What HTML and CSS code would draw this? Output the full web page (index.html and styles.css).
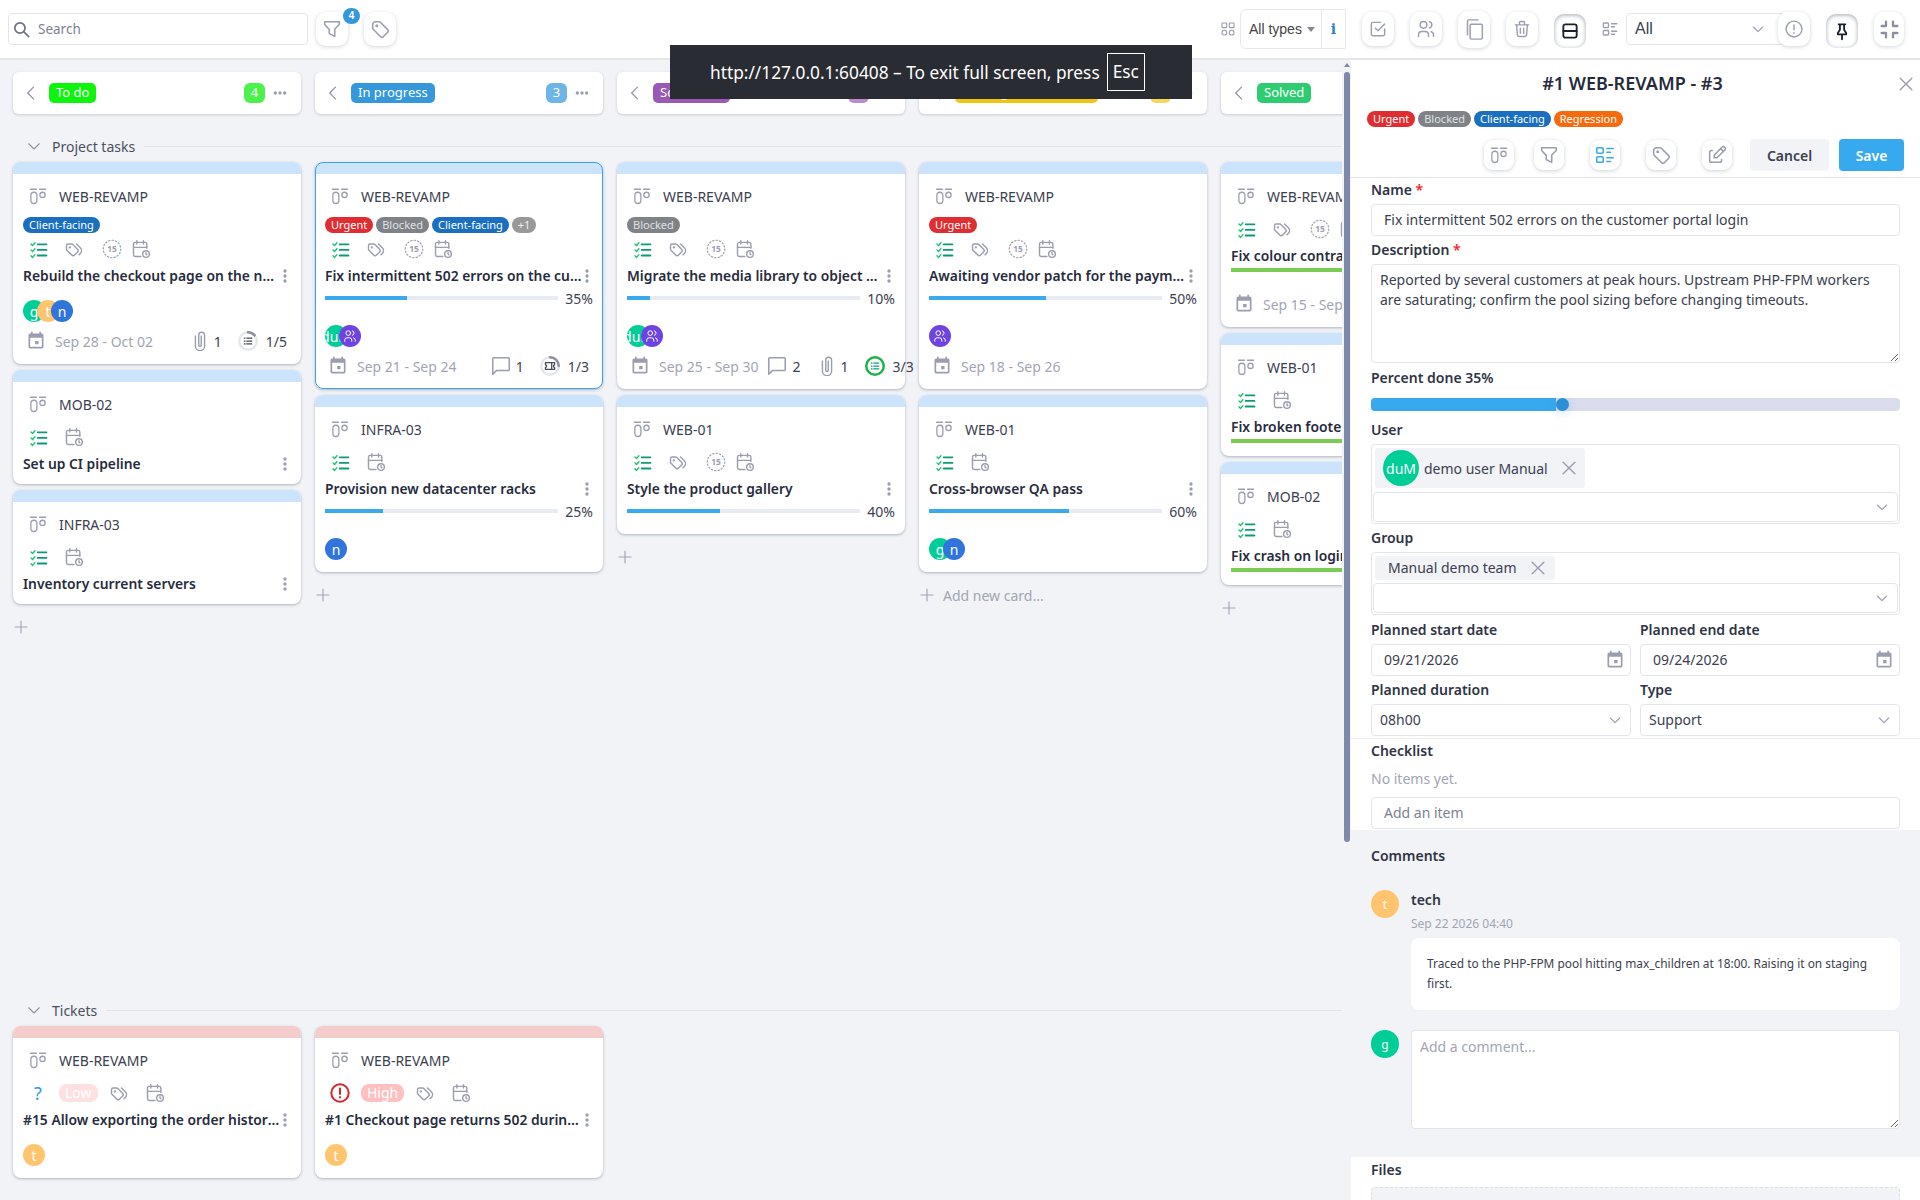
FILE: index.html
```html
<!DOCTYPE html>
<html lang="en">
<head>
    <meta charset="UTF-8">
    <title>Kanban</title>
    <link rel="stylesheet" href="styles.css">
</head>
<body>

<svg class="sprite" xmlns="http://www.w3.org/2000/svg">
    <symbol id="i-project" viewBox="0 0 24 24"><path d="M2 3h8M14 3h8"/><rect x="2.500" y="7" width="8" height="15" rx="4"/><circle cx="18" cy="10.500" r="3.500"/></symbol>
    <symbol id="i-checklist" viewBox="0 0 24 24"><path stroke="#18c26e" d="M2.500 5l2 2 3-3.500M2.500 12.500l2 2 3-3.500M2.500 20l2 2 3-3.500"/><path stroke="#0b9b77" stroke-width="2.400" d="M11 5.500h11M11 12.500h11M11 19.500h11"/></symbol>
    <symbol id="i-tags" viewBox="0 0 24 24"><path d="M3 8v4.172a2 2 0 0 0 .586 1.414l5.71 5.71a2.41 2.41 0 0 0 3.408 0l3.592-3.592a2.41 2.41 0 0 0 0-3.408l-5.71-5.71A2 2 0 0 0 9.172 6H5a2 2 0 0 0-2 2z"/><path d="M18 19l1.592-1.592a4.82 4.82 0 0 0 0-6.816L15 6"/><circle cx="7" cy="10" r=".6"/></symbol>
    <symbol id="i-estimate" viewBox="0 0 24 24"><circle cx="12" cy="12" r="10.500" stroke-width="1.400" stroke-dasharray="1.600 2.500"/><text x="12" y="15.500" font-size="10" font-weight="700" text-anchor="middle" stroke="none" fill="currentColor" font-family="Noto Sans, sans-serif">15</text></symbol>
    <symbol id="i-calclock" viewBox="0 0 24 24"><path d="M11.800 21H5a2 2 0 0 1-2-2V6a2 2 0 0 1 2-2h12a2 2 0 0 1 2 2v5"/><circle cx="18" cy="18" r="4"/><path d="M15 2v4M7 2v4M3 10h16M18 16.500V18l1 1"/></symbol>
    <symbol id="i-cal" viewBox="0 0 24 24"><path stroke="none" fill="currentColor" d="M19 3h-1V1h-2v2H8V1H6v2H5C3.890 3 3 3.900 3 5v14c0 1.100.890 2 2 2h14c1.100 0 2-.9 2-2V5c0-1.100-.9-2-2-2zm0 16H5V8h14v11zM11 12h4v4h-4z"/></symbol>
    <symbol id="i-clip" viewBox="0 0 24 24"><path d="M6.500 6v12a5.500 5.500 0 0 0 11 0V5a3.500 3.500 0 0 0-7 0v12a1.500 1.500 0 0 0 3 0V6"/></symbol>
    <symbol id="i-comment" viewBox="0 0 24 24"><path d="M4 3h16a1 1 0 0 1 1 1v12a1 1 0 0 1-1 1H7l-4 4V4a1 1 0 0 1 1-1z"/></symbol>
    <symbol id="i-search" viewBox="0 0 24 24"><circle cx="10" cy="10" r="6.500"/><path d="M15 15l6 6"/></symbol>
    <symbol id="i-filter" viewBox="0 0 24 24"><path d="M4 4h16v2.200a2 2 0 0 1-.6 1.400L15 12v8l-6-3v-4.500L4.500 7.600A2 2 0 0 1 4 6.200z"/></symbol>
    <symbol id="i-tag" viewBox="0 0 24 24"><circle cx="8.500" cy="8.500" r=".8"/><path d="M4 7v3.860c0 .54.210 1.050.590 1.430l8.120 8.120a2.030 2.030 0 0 0 2.860 0l4.830-4.830a2.030 2.030 0 0 0 0-2.860L12.290 4.590A2.030 2.030 0 0 0 10.860 4H7a3 3 0 0 0-3 3z"/></symbol>
    <symbol id="i-checkbox" viewBox="0 0 24 24"><path d="M9 11l3 3 8-8"/><path d="M20 12v6a2 2 0 0 1-2 2H6a2 2 0 0 1-2-2V6a2 2 0 0 1 2-2h9"/></symbol>
    <symbol id="i-users" viewBox="0 0 24 24"><circle cx="9" cy="7" r="4"/><path d="M3 21v-2a4 4 0 0 1 4-4h4a4 4 0 0 1 4 4v2"/><path d="M16 3.130a4 4 0 0 1 0 7.750"/><path d="M21 21v-2a4 4 0 0 0-3-3.850"/></symbol>
    <symbol id="i-copy" viewBox="0 0 24 24"><rect x="7" y="6" width="14" height="17" rx="1.500"/><path d="M4 18V2.500A1.500 1.500 0 0 1 5.500 1H16"/></symbol>
    <symbol id="i-trash" viewBox="0 0 24 24"><path d="M4 7h16M10 11v6M14 11v6M5.500 7l1 12a2 2 0 0 0 2 2h7a2 2 0 0 0 2-2l1-12M9 7V4a1 1 0 0 1 1-1h4a1 1 0 0 1 1 1v3"/></symbol>
    <symbol id="i-split" viewBox="0 0 24 24"><rect x="4" y="4" width="16" height="16" rx="2.500"/><path d="M4 12h16"/></symbol>
    <symbol id="i-listview" viewBox="0 0 24 24"><rect x="3" y="4" width="7" height="6" rx="1"/><path d="M14 5h7M14 9h4"/><rect x="3" y="14" width="7" height="6" rx="1"/><path d="M14 15h7M14 19h4"/></symbol>
    <symbol id="i-grid" viewBox="0 0 24 24"><rect x="3" y="3" width="7" height="7" rx="1"/><rect x="14" y="3" width="7" height="7" rx="1"/><rect x="3" y="14" width="7" height="7" rx="3"/><rect x="14" y="14" width="7" height="7" rx="3"/></symbol>
    <symbol id="i-alert" viewBox="0 0 24 24"><circle cx="12" cy="12" r="9.500"/><path d="M12 7v6M12 16.500v.5"/></symbol>
    <symbol id="i-pin" viewBox="0 0 24 24"><path d="M8 4h8M9.500 4v6.500L7 14.500v1.500h10v-1.500l-2.500-4V4M12 16v6"/></symbol>
    <symbol id="i-collapse" viewBox="0 0 24 24"><path d="M8 3v5H3M16 3v5h5M8 21v-5H3M16 21v-5h5"/></symbol>
    <symbol id="i-edit" viewBox="0 0 24 24"><path d="M7 7H6a2 2 0 0 0-2 2v9a2 2 0 0 0 2 2h9a2 2 0 0 0 2-2v-1"/><path d="M20.400 6.600a2.100 2.100 0 0 0-3-3L9 12v3h3z"/><path d="M16 5l3 3"/></symbol>
    <symbol id="i-x" viewBox="0 0 24 24"><path d="M5 5l14 14M19 5L5 19"/></symbol>
    <symbol id="i-down" viewBox="0 0 24 24"><path d="M5 9l7 7 7-7"/></symbol>
    <symbol id="i-left" viewBox="0 0 24 24"><path d="M15 5l-7 7 7 7"/></symbol>
    <symbol id="i-plus" viewBox="0 0 24 24"><path d="M12 3v18M3 12h18"/></symbol>
    <symbol id="i-vdots" viewBox="0 0 24 24"><circle cx="12" cy="4.500" r="2.500" fill="currentColor" stroke="none"/><circle cx="12" cy="12" r="2.500" fill="currentColor" stroke="none"/><circle cx="12" cy="19.500" r="2.500" fill="currentColor" stroke="none"/></symbol>
    <symbol id="i-hdots" viewBox="0 0 24 24"><circle cx="4" cy="12" r="2.800" fill="currentColor" stroke="none"/><circle cx="12" cy="12" r="2.800" fill="currentColor" stroke="none"/><circle cx="20" cy="12" r="2.800" fill="currentColor" stroke="none"/></symbol>
    <symbol id="i-ring-list" viewBox="0 0 24 24"><circle cx="12" cy="12" r="10.500" stroke="#e6e7ec" stroke-width="3"/><path stroke="#8d90a0" stroke-width="3" d="M12 1.500a10.500 10.500 0 0 1 8 3.700"/><path stroke="#444a5c" stroke-width="1.500" d="M7.500 8.500h1M7.500 12h1M7.500 15.500h1M10.500 8.500h6M10.500 12h6M10.500 15.500h6"/></symbol>
    <symbol id="i-ring-ticket" viewBox="0 0 24 24"><circle cx="12" cy="12" r="10.500" stroke="#e6e7ec" stroke-width="3"/><path stroke="#8d90a0" stroke-width="3" d="M12 1.500a10.500 10.500 0 0 1 10.500 10.500"/><path stroke="#444a5c" stroke-width="1.500" d="M6.500 8h11v2.500a1.500 1.500 0 0 0 0 3V16h-11v-2.500a1.500 1.500 0 0 0 0-3zM14 8v8"/></symbol>
    <symbol id="i-ring-done" viewBox="0 0 24 24"><circle cx="12" cy="12" r="10.500" stroke="#1fb24a" stroke-width="3"/><path stroke="#0b9b77" stroke-width="1.500" d="M7.500 8.500h1M7.500 12h1M7.500 15.500h1M10.500 8.500h6M10.500 12h6M10.500 15.500h6"/></symbol>
</svg>

<header class="topbar">
    <div class="search">
        <svg class="ic ic-19"><use href="#i-search"/></svg>
        <span>Search</span>
    </div>
    <button class="tb-btn has-badge"><svg class="ic ic-22"><use href="#i-filter"/></svg><span class="badge">4</span></button>
    <button class="tb-btn tb-tag"><svg class="ic ic-22"><use href="#i-tag"/></svg></button>

    <div class="tb-right">
        <svg class="ic ic-16 tb-grid"><use href="#i-grid"/></svg>
        <div class="types">
            <span class="types-label">All types <i class="caret"></i></span>
            <span class="types-info">i</span>
        </div>
        <button class="tb-btn"><svg class="ic ic-20"><use href="#i-checkbox"/></svg></button>
        <button class="tb-btn"><svg class="ic ic-20"><use href="#i-users"/></svg></button>
        <button class="tb-btn tb-tall"><svg class="ic ic-21"><use href="#i-copy"/></svg></button>
        <button class="tb-btn"><svg class="ic ic-20"><use href="#i-trash"/></svg></button>
        <button class="tb-btn active"><svg class="ic ic-20 dark"><use href="#i-split"/></svg></button>
        <svg class="ic ic-18 tb-list"><use href="#i-listview"/></svg>
        <div class="all-select">All<svg class="ic ic-16"><use href="#i-down"/></svg></div>
        <button class="tb-btn tb-over"><svg class="ic ic-20"><use href="#i-alert"/></svg></button>
        <button class="tb-btn active"><svg class="ic ic-20 dark"><use href="#i-pin"/></svg></button>
        <button class="tb-btn tb-last"><svg class="ic ic-21 dark-gray"><use href="#i-collapse"/></svg></button>
    </div>
</header>

<main class="main">
    <section class="board">
        <div class="col-heads">
            <div class="col-head">
                <svg class="ic ic-20 chev"><use href="#i-left"/></svg>
                <span class="pill" style="background:#0df50d">To do</span>
                <span class="count" style="background:#4cf24c">4</span>
                <svg class="ic ic-14 hdots"><use href="#i-hdots"/></svg>
            </div>
            <div class="col-head">
                <svg class="ic ic-20 chev"><use href="#i-left"/></svg>
                <span class="pill" style="background:#3498db">In progress</span>
                <span class="count" style="background:#6cb5e6">3</span>
                <svg class="ic ic-14 hdots"><use href="#i-hdots"/></svg>
            </div>
            <div class="col-head">
                <svg class="ic ic-20 chev"><use href="#i-left"/></svg>
                <span class="pill" style="background:#9b59b6">Scheduled</span>
                <span class="count" style="background:#b98ccb">3</span>
                <svg class="ic ic-14 hdots"><use href="#i-hdots"/></svg>
            </div>
            <div class="col-head">
                <svg class="ic ic-20 chev"><use href="#i-left"/></svg>
                <span class="pill" style="background:#f1c40f">Waiting for customer</span>
                <span class="count" style="background:#f5d657">3</span>
                <svg class="ic ic-14 hdots"><use href="#i-hdots"/></svg>
            </div>
            <div class="col-head">
                <svg class="ic ic-20 chev"><use href="#i-left"/></svg>
                <span class="pill" style="background:#2ecc71">Solved</span>
            </div>
        </div>

        <!-- Project tasks -->
        <div class="lane lane-tasks">
            <div class="lane-title">
                <svg class="ic ic-18 lane-chev"><use href="#i-down"/></svg>
                <span>Project tasks</span>
                <i class="lane-line"></i>
            </div>
            <div class="lane-cols">
                <div class="col">
                    <article class="card">
                        <div class="strip"></div>
                        <div class="proj"><svg class="ic ic-18"><use href="#i-project"/></svg>WEB-REVAMP</div>
                        <div class="tags"><span class="tag tag-client">Client-facing</span></div>
                        <div class="icons"><span><svg class="ic ic-19"><use href="#i-checklist"/></svg></span><span><svg class="ic ic-20"><use href="#i-tags"/></svg></span><span><svg class="ic ic-20"><use href="#i-estimate"/></svg></span><span><svg class="ic ic-20"><use href="#i-calclock"/></svg></span></div>
                        <div class="title-row"><span class="title">Rebuild the checkout page on the new stack</span><svg class="ic vdots"><use href="#i-vdots"/></svg></div>
                        <div class="avatars"><span class="av av-g">g</span><span class="av av-t">t</span><span class="av av-n">n</span></div>
                        <div class="dates">
                            <svg class="ic ic-20"><use href="#i-cal"/></svg><span class="date-text">Sep 28 - Oct 02</span>
                            <div class="metas">
                                <span class="meta"><svg class="ic ic-20"><use href="#i-clip"/></svg>1</span>
                                <span class="meta meta-ring"><svg class="ic ic-20"><use href="#i-ring-list"/></svg>1/5</span>
                            </div>
                        </div>
                    </article>
                    <article class="card">
                        <div class="strip"></div>
                        <div class="proj"><svg class="ic ic-18"><use href="#i-project"/></svg>MOB-02</div>
                        <div class="icons no-tags"><span><svg class="ic ic-19"><use href="#i-checklist"/></svg></span><span><svg class="ic ic-20"><use href="#i-calclock"/></svg></span></div>
                        <div class="title-row"><span class="title">Set up CI pipeline</span><svg class="ic vdots"><use href="#i-vdots"/></svg></div>
                    </article>
                    <article class="card">
                        <div class="strip"></div>
                        <div class="proj"><svg class="ic ic-18"><use href="#i-project"/></svg>INFRA-03</div>
                        <div class="icons no-tags"><span><svg class="ic ic-19"><use href="#i-checklist"/></svg></span><span><svg class="ic ic-20"><use href="#i-calclock"/></svg></span></div>
                        <div class="title-row"><span class="title">Inventory current servers</span><svg class="ic vdots"><use href="#i-vdots"/></svg></div>
                    </article>
                    <div class="add"><svg class="ic ic-16"><use href="#i-plus"/></svg></div>
                </div>

                <div class="col">
                    <article class="card selected">
                        <div class="strip"></div>
                        <div class="proj"><svg class="ic ic-18"><use href="#i-project"/></svg>WEB-REVAMP</div>
                        <div class="tags"><span class="tag tag-urgent">Urgent</span><span class="tag tag-blocked">Blocked</span><span class="tag tag-client">Client-facing</span><span class="tag tag-more">+1</span></div>
                        <div class="icons"><span><svg class="ic ic-19"><use href="#i-checklist"/></svg></span><span><svg class="ic ic-20"><use href="#i-tags"/></svg></span><span><svg class="ic ic-20"><use href="#i-estimate"/></svg></span><span><svg class="ic ic-20"><use href="#i-calclock"/></svg></span></div>
                        <div class="title-row"><span class="title">Fix intermittent 502 errors on the customer portal login</span><svg class="ic vdots"><use href="#i-vdots"/></svg></div>
                        <div class="progress"><div class="track"><div class="fill" style="width:35%"></div></div><span class="pct">35%</span></div>
                        <div class="avatars"><span class="av av-g">duM</span><span class="av av-grp"><svg class="ic ic-14"><use href="#i-users"/></svg></span></div>
                        <div class="dates">
                            <svg class="ic ic-20"><use href="#i-cal"/></svg><span class="date-text">Sep 21 - Sep 24</span>
                            <div class="metas">
                                <span class="meta"><svg class="ic ic-22"><use href="#i-comment"/></svg>1</span>
                                <span class="meta meta-ring"><svg class="ic ic-20"><use href="#i-ring-ticket"/></svg>1/3</span>
                            </div>
                        </div>
                    </article>
                    <article class="card">
                        <div class="strip"></div>
                        <div class="proj"><svg class="ic ic-18"><use href="#i-project"/></svg>INFRA-03</div>
                        <div class="icons no-tags"><span><svg class="ic ic-19"><use href="#i-checklist"/></svg></span><span><svg class="ic ic-20"><use href="#i-calclock"/></svg></span></div>
                        <div class="title-row"><span class="title">Provision new datacenter racks</span><svg class="ic vdots"><use href="#i-vdots"/></svg></div>
                        <div class="progress"><div class="track"><div class="fill" style="width:25%"></div></div><span class="pct">25%</span></div>
                        <div class="avatars"><span class="av av-n">n</span></div>
                    </article>
                    <div class="add"><svg class="ic ic-16"><use href="#i-plus"/></svg></div>
                </div>

                <div class="col">
                    <article class="card">
                        <div class="strip"></div>
                        <div class="proj"><svg class="ic ic-18"><use href="#i-project"/></svg>WEB-REVAMP</div>
                        <div class="tags"><span class="tag tag-blocked">Blocked</span></div>
                        <div class="icons"><span><svg class="ic ic-19"><use href="#i-checklist"/></svg></span><span><svg class="ic ic-20"><use href="#i-tags"/></svg></span><span><svg class="ic ic-20"><use href="#i-estimate"/></svg></span><span><svg class="ic ic-20"><use href="#i-calclock"/></svg></span></div>
                        <div class="title-row"><span class="title">Migrate the media library to object storage</span><svg class="ic vdots"><use href="#i-vdots"/></svg></div>
                        <div class="progress"><div class="track"><div class="fill" style="width:10%"></div></div><span class="pct">10%</span></div>
                        <div class="avatars"><span class="av av-g">duM</span><span class="av av-grp"><svg class="ic ic-14"><use href="#i-users"/></svg></span></div>
                        <div class="dates">
                            <svg class="ic ic-20"><use href="#i-cal"/></svg><span class="date-text">Sep 25 - Sep 30</span>
                            <div class="metas">
                                <span class="meta"><svg class="ic ic-22"><use href="#i-comment"/></svg>2</span>
                                <span class="meta"><svg class="ic ic-20"><use href="#i-clip"/></svg>1</span>
                                <span class="meta meta-ring"><svg class="ic ic-20"><use href="#i-ring-done"/></svg>3/3</span>
                            </div>
                        </div>
                    </article>
                    <article class="card">
                        <div class="strip"></div>
                        <div class="proj"><svg class="ic ic-18"><use href="#i-project"/></svg>WEB-01</div>
                        <div class="icons no-tags"><span><svg class="ic ic-19"><use href="#i-checklist"/></svg></span><span><svg class="ic ic-20"><use href="#i-tags"/></svg></span><span><svg class="ic ic-20"><use href="#i-estimate"/></svg></span><span><svg class="ic ic-20"><use href="#i-calclock"/></svg></span></div>
                        <div class="title-row"><span class="title">Style the product gallery</span><svg class="ic vdots"><use href="#i-vdots"/></svg></div>
                        <div class="progress"><div class="track"><div class="fill" style="width:40%"></div></div><span class="pct">40%</span></div>
                    </article>
                    <div class="add"><svg class="ic ic-16"><use href="#i-plus"/></svg></div>
                </div>

                <div class="col">
                    <article class="card">
                        <div class="strip"></div>
                        <div class="proj"><svg class="ic ic-18"><use href="#i-project"/></svg>WEB-REVAMP</div>
                        <div class="tags"><span class="tag tag-urgent">Urgent</span></div>
                        <div class="icons"><span><svg class="ic ic-19"><use href="#i-checklist"/></svg></span><span><svg class="ic ic-20"><use href="#i-tags"/></svg></span><span><svg class="ic ic-20"><use href="#i-estimate"/></svg></span><span><svg class="ic ic-20"><use href="#i-calclock"/></svg></span></div>
                        <div class="title-row"><span class="title">Awaiting vendor patch for the payment gateway</span><svg class="ic vdots"><use href="#i-vdots"/></svg></div>
                        <div class="progress"><div class="track"><div class="fill" style="width:50%"></div></div><span class="pct">50%</span></div>
                        <div class="avatars"><span class="av av-grp"><svg class="ic ic-14"><use href="#i-users"/></svg></span></div>
                        <div class="dates">
                            <svg class="ic ic-20"><use href="#i-cal"/></svg><span class="date-text">Sep 18 - Sep 26</span>
                        </div>
                    </article>
                    <article class="card">
                        <div class="strip"></div>
                        <div class="proj"><svg class="ic ic-18"><use href="#i-project"/></svg>WEB-01</div>
                        <div class="icons no-tags"><span><svg class="ic ic-19"><use href="#i-checklist"/></svg></span><span><svg class="ic ic-20"><use href="#i-calclock"/></svg></span></div>
                        <div class="title-row"><span class="title">Cross-browser QA pass</span><svg class="ic vdots"><use href="#i-vdots"/></svg></div>
                        <div class="progress"><div class="track"><div class="fill" style="width:60%"></div></div><span class="pct">60%</span></div>
                        <div class="avatars"><span class="av av-g">g</span><span class="av av-n">n</span></div>
                    </article>
                    <div class="add"><svg class="ic ic-16"><use href="#i-plus"/></svg><span>Add new card...</span></div>
                </div>

                <div class="col">
                    <article class="card">
                        <div class="strip"></div>
                        <div class="proj"><svg class="ic ic-18"><use href="#i-project"/></svg>WEB-REVAMP</div>
                        <div class="icons no-tags"><span><svg class="ic ic-19"><use href="#i-checklist"/></svg></span><span><svg class="ic ic-20"><use href="#i-tags"/></svg></span><span><svg class="ic ic-20"><use href="#i-estimate"/></svg></span><span><svg class="ic ic-20"><use href="#i-calclock"/></svg></span></div>
                        <div class="title-row"><span class="title">Fix colour contrast on buttons</span></div>
                        <div class="bar-done"></div>
                        <div class="dates dates-solved">
                            <svg class="ic ic-20"><use href="#i-cal"/></svg><span class="date-text">Sep 15 - Sep 18</span>
                        </div>
                    </article>
                    <article class="card">
                        <div class="strip"></div>
                        <div class="proj"><svg class="ic ic-18"><use href="#i-project"/></svg>WEB-01</div>
                        <div class="icons no-tags"><span><svg class="ic ic-19"><use href="#i-checklist"/></svg></span><span><svg class="ic ic-20"><use href="#i-calclock"/></svg></span></div>
                        <div class="title-row"><span class="title">Fix broken footer links</span></div>
                        <div class="bar-done"></div>
                    </article>
                    <article class="card">
                        <div class="strip"></div>
                        <div class="proj"><svg class="ic ic-18"><use href="#i-project"/></svg>MOB-02</div>
                        <div class="icons no-tags"><span><svg class="ic ic-19"><use href="#i-checklist"/></svg></span><span><svg class="ic ic-20"><use href="#i-calclock"/></svg></span></div>
                        <div class="title-row"><span class="title">Fix crash on login screen</span></div>
                        <div class="bar-done"></div>
                    </article>
                    <div class="add"><svg class="ic ic-16"><use href="#i-plus"/></svg></div>
                </div>
            </div>
        </div>

        <!-- Tickets -->
        <div class="lane">
            <div class="lane-title">
                <svg class="ic ic-18 lane-chev"><use href="#i-down"/></svg>
                <span>Tickets</span>
                <i class="lane-line"></i>
            </div>
            <div class="lane-cols">
                <div class="col">
                    <article class="card">
                        <div class="strip strip-ticket"></div>
                        <div class="proj"><svg class="ic ic-18"><use href="#i-project"/></svg>WEB-REVAMP</div>
                        <div class="icons no-tags ticket-icons"><span class="help">?</span><span class="prio prio-low">Low</span><svg class="ic ic-20"><use href="#i-tags"/></svg><svg class="ic ic-20 cal-gap"><use href="#i-calclock"/></svg></div>
                        <div class="title-row"><span class="title">#15 Allow exporting the order history as CSV</span><svg class="ic vdots"><use href="#i-vdots"/></svg></div>
                        <div class="avatars"><span class="av av-t">t</span></div>
                    </article>
                </div>
                <div class="col">
                    <article class="card">
                        <div class="strip strip-ticket"></div>
                        <div class="proj"><svg class="ic ic-18"><use href="#i-project"/></svg>WEB-REVAMP</div>
                        <div class="icons no-tags ticket-icons"><svg class="ic ic-22 red"><use href="#i-alert"/></svg><span class="prio prio-high">High</span><svg class="ic ic-20"><use href="#i-tags"/></svg><svg class="ic ic-20 cal-gap"><use href="#i-calclock"/></svg></div>
                        <div class="title-row"><span class="title">#1 Checkout page returns 502 during checkout</span><svg class="ic vdots"><use href="#i-vdots"/></svg></div>
                        <div class="avatars"><span class="av av-t">t</span></div>
                    </article>
                </div>
            </div>
        </div>
    </section>

    <div class="scrollbar"><i class="scroll-up"></i><i class="scroll-thumb"></i></div>

    <aside class="panel">
        <div class="panel-head">
            <h2>#1 WEB-REVAMP - #3</h2>
            <svg class="ic ic-20 panel-close"><use href="#i-x"/></svg>
        </div>
        <div class="panel-tags">
            <span class="tag tag-urgent">Urgent</span><span class="tag tag-blocked">Blocked</span><span class="tag tag-client">Client-facing</span><span class="tag tag-regress">Regression</span>
        </div>
        <div class="panel-actions">
            <button class="act-btn act-first"><svg class="ic ic-18"><use href="#i-project"/></svg></button>
            <button class="act-btn"><svg class="ic ic-22"><use href="#i-filter"/></svg></button>
            <button class="act-btn"><svg class="ic ic-22 blue"><use href="#i-listview"/></svg></button>
            <button class="act-btn"><svg class="ic ic-22"><use href="#i-tag"/></svg></button>
            <button class="act-btn act-last"><svg class="ic ic-22"><use href="#i-edit"/></svg></button>
            <button class="btn btn-cancel">Cancel</button>
            <button class="btn btn-save">Save</button>
        </div>

        <div class="form">
            <label class="lbl">Name <b>*</b></label>
            <input class="field" type="text" value="Fix intermittent 502 errors on the customer portal login">

            <label class="lbl lbl-next">Description <b>*</b></label>
            <textarea class="area">Reported by several customers at peak hours. Upstream PHP-FPM workers are saturating; confirm the pool sizing before changing timeouts.</textarea>

            <label class="lbl lbl-percent">Percent done 35%</label>
            <div class="slider"><div class="slider-fill" style="width:35%"></div><i class="slider-thumb"></i></div>

            <label class="lbl lbl-user">User</label>
            <div class="multi">
                <div class="chip chip-user"><span class="av av-g av-36">duM</span><span>demo user Manual</span><svg class="ic ic-20"><use href="#i-x"/></svg></div>
                <div class="multi-input"><svg class="ic ic-16"><use href="#i-down"/></svg></div>
            </div>

            <label class="lbl lbl-next">Group</label>
            <div class="multi">
                <div class="chip chip-group"><span>Manual demo team</span><svg class="ic ic-20"><use href="#i-x"/></svg></div>
                <div class="multi-input"><svg class="ic ic-16"><use href="#i-down"/></svg></div>
            </div>

            <div class="pair">
                <div>
                    <label class="lbl lbl-dates">Planned start date</label>
                    <div class="field date-field">09/21/2026<svg class="ic ic-20"><use href="#i-cal"/></svg></div>
                </div>
                <div>
                    <label class="lbl lbl-dates">Planned end date</label>
                    <div class="field date-field">09/24/2026<svg class="ic ic-20"><use href="#i-cal"/></svg></div>
                </div>
                <div>
                    <label class="lbl lbl-next">Planned duration</label>
                    <div class="field select-field">08h00<svg class="ic ic-16"><use href="#i-down"/></svg></div>
                </div>
                <div>
                    <label class="lbl lbl-next">Type</label>
                    <div class="field select-field">Support<svg class="ic ic-16"><use href="#i-down"/></svg></div>
                </div>
            </div>
        </div>

        <div class="checklist">
            <label class="lbl">Checklist</label>
            <p class="no-items">No items yet.</p>
            <input class="field" type="text" placeholder="Add an item">
        </div>

        <div class="comments">
            <h3 class="lbl">Comments</h3>
            <div class="comment">
                <span class="av av-t av-28">t</span>
                <div class="comment-body">
                    <div class="comment-author">tech</div>
                    <div class="comment-date">Sep 22 2026 04:40</div>
                    <div class="bubble">Traced to the PHP-FPM pool hitting max_children at 18:00. Raising it on staging first.</div>
                </div>
            </div>
            <div class="comment comment-new">
                <span class="av av-g av-28">g</span>
                <textarea class="area comment-area" placeholder="Add a comment..."></textarea>
            </div>
        </div>

        <div class="files">
            <label class="lbl">Files</label>
            <div class="dropzone"></div>
        </div>
    </aside>
</main>

<div class="fs-warning">
    <span>http://127.0.0.1:60408 – To exit full screen, press</span>
    <kbd>Esc</kbd>
</div>

</body>
</html>
```

FILE: styles.css
```css
* {
    box-sizing: border-box;
}
html, body {
    height: 100%;
}
body {
    margin: 0;
    height: 1200px;
    overflow: hidden;
    font-family: "Noto Sans", sans-serif;
    font-size: 13px;
    color: #2b3044;
    background-color: #f1f3f7;
}
.sprite {
    display: none;
}
.ic {
    flex: none;
    fill: none;
    stroke: currentColor;
    stroke-width: 1.7;
    stroke-linecap: round;
    stroke-linejoin: round;
    color: #9a9eae;
}
.ic-14 { width: 14px; height: 14px; }
.ic-16 { width: 16px; height: 16px; }
.ic-18 { width: 18px; height: 18px; }
.ic-19 { width: 19px; height: 19px; }
.ic-20 { width: 20px; height: 20px; }
.ic-21 { width: 21px; height: 21px; }
.ic-22 { width: 22px; height: 22px; }
.dark { color: #1c2030; stroke-width: 2.2; }
.dark-gray { color: #8b8f9e; stroke-width: 2.6; }
.blue { color: #3ba9ee; }
.red { color: #d9252b; stroke-width: 2.2; }

/* top bar */
.topbar {
    display: flex;
    align-items: center;
    height: 60px;
    padding: 0 16px 0 8px;
    background-color: #fff;
    border-bottom: 2px solid #e4e6ea;
}
.search {
    display: flex;
    align-items: center;
    gap: 7px;
    width: 300px;
    height: 32px;
    padding-left: 3px;
    border: 1px solid #e3e5ea;
    border-radius: 4px;
    font-size: 13.500px;
    color: #7d8291;
}
.search .ic {
    color: #6f7484;
    stroke-width: 2.200;
}
.tb-btn {
    position: relative;
    display: flex;
    align-items: center;
    justify-content: center;
    flex: none;
    width: 32px;
    height: 34px;
    padding: 0;
    background-color: #fff;
    border: 0;
    border-radius: 10px;
    box-shadow: 0 1px 4px rgba(20, 30, 60, .18);
}
.tb-btn.has-badge {
    margin-left: 8px;
}
.tb-tag {
    margin-left: 16px;
}
.tb-tall {
    height: 37px;
}
.tb-last {
    width: 30px;
}
.tb-btn.active {
    margin-top: 4px;
    box-shadow: inset 0 1px 4px rgba(20, 30, 60, .4);
}
.badge {
    position: absolute;
    top: -4px;
    right: -12px;
    width: 17px;
    height: 16px;
    border-radius: 8px;
    background-color: #3498db;
    color: #fff;
    font-size: 10px;
    font-weight: 600;
    line-height: 16px;
    text-align: center;
}
.tb-right {
    display: flex;
    align-items: center;
    gap: 16px;
    margin-left: auto;
}
.tb-grid {
    margin-right: -12px;
}
.tb-list {
    margin-right: -9px;
    margin-left: -1px;
}
.types {
    display: flex;
    align-items: stretch;
    width: 106px;
    height: 40px;
    border: 1px solid #e6e8ec;
    border-radius: 6px 0 0 6px;
    font-family: "Liberation Sans", sans-serif;
    font-size: 14px;
    color: #444;
}
.types-label {
    display: flex;
    align-items: center;
    flex: 1;
    padding-left: 8px;
    white-space: nowrap;
}
.caret {
    width: 0;
    height: 0;
    margin-left: 5px;
    border: 4px solid transparent;
    border-top: 5px solid #888;
    border-bottom: 0;
}
.types-info {
    width: 24px;
    border-left: 1px solid #e6e8ec;
    font-family: "DejaVu Serif", serif;
    font-weight: 700;
    font-size: 14px;
    line-height: 38px;
    text-align: center;
    color: #2f80c8;
}
.all-select {
    display: flex;
    align-items: center;
    justify-content: space-between;
    width: 158px;
    height: 32px;
    padding: 0 17px 0 8px;
    border: 1px solid #e3e5ea;
    border-radius: 4px;
    font-family: "Liberation Sans", sans-serif;
    font-size: 16px;
    color: #3c4150;
}
.tb-right .tb-over {
    margin-left: -22px;
}

/* board */
.main {
    display: flex;
    height: 1140px;
}
.board {
    flex: none;
    width: 1342px;
    padding: 12px 0 0 13px;
    overflow: hidden;
}
.col-heads, .lane-cols {
    display: flex;
    gap: 14px;
}
.col-head {
    display: flex;
    flex: none;
    align-items: center;
    width: 288px;
    height: 42px;
    padding: 0 14px 0 8px;
    background-color: #fff;
    border-radius: 6px;
    box-shadow: 0 1px 3px rgba(20, 30, 60, .18);
}
.chev {
    margin-right: 8px;
    color: #8f93a2;
    stroke-width: 1.400;
}
.pill {
    height: 20px;
    padding: 0 7px;
    border-radius: 5px;
    color: #fff;
    font-size: 13px;
    line-height: 19px;
    white-space: nowrap;
}
.count {
    width: 21px;
    height: 20px;
    margin-left: auto;
    border-radius: 6px;
    color: #fff;
    font-size: 13px;
    line-height: 19px;
    text-align: center;
}
.hdots {
    margin-left: 8px;
    color: #9a9eae;
}
.lane-tasks {
    height: 864px;
}
.lane-title {
    display: flex;
    align-items: center;
    height: 20px;
    margin: 0 0 6px 12px;
    font-size: 14px;
    color: #4b5060;
}
.lane-tasks .lane-title {
    margin-top: 22px;
}
.lane-chev {
    margin-right: 9px;
    color: #8f93a2;
    stroke-width: 1.500;
}
.lane-line {
    flex: 1;
    height: 1px;
    margin-left: 9px;
    background-color: #e3e5ea;
}
.col {
    display: flex;
    flex: none;
    flex-direction: column;
    gap: 6px;
    width: 288px;
}
.card {
    padding-bottom: 10px;
    background-color: #fff;
    border-radius: 8px;
    box-shadow: 0 1px 3px rgba(20, 30, 60, .3);
}
.card.selected {
    outline: 1px solid #3ba4e8;
    outline-offset: -1px;
}
.strip {
    height: 12px;
    background-color: #cce4fb;
    border-radius: 8px 8px 0 0;
}
.strip-ticket {
    background-color: #f5cccc;
}
.proj {
    display: flex;
    align-items: center;
    gap: 12px;
    height: 26px;
    margin-top: 10px;
    padding: 0 0 2px 16px;
    font-size: 14px;
    color: #3b4050;
}
.tags {
    display: flex;
    gap: 3px;
    height: 15px;
    margin: 7px 0 5px;
    padding-left: 10px;
}
.tag {
    height: 16px;
    padding: 0 6px;
    border-radius: 8px;
    color: #fff;
    font-size: 11px;
    line-height: 15px;
    white-space: nowrap;
}
.tag-urgent { background-color: #e02d32; }
.tag-blocked { background-color: #7f8387; color: #dfe1e4; }
.tag-client { background-color: #1a6fc0; }
.tag-more { background-color: #999; color: #eee; }
.tag-regress { background-color: #f56a0c; }
.icons {
    display: flex;
    align-items: center;
    height: 24px;
    padding-left: 16px;
}
.icons.no-tags {
    margin-top: 7px;
}
.icons > span {
    display: block;
    width: 35px;
    line-height: 0;
}
.icons > span:nth-child(2) {
    width: 38px;
}
.icons > span:nth-child(3) {
    width: 29px;
}
.ticket-icons {
    padding-left: 14px;
}
.ticket-icons > span.help {
    width: 32px;
    padding-left: 7px;
    color: #3498db;
    font-size: 18px;
    line-height: 22px;
}
.ticket-icons > .ic:first-child {
    margin-right: 10px;
}
.ticket-icons > span.prio {
    width: auto;
    height: 18px;
    margin-right: 11px;
    padding: 0 6px;
    border-radius: 8px;
    color: #fff;
    font-size: 14px;
    line-height: 17px;
}
.prio-low { background-color: #fde0e0; }
.prio-high { background-color: #ffc0c0; }
.cal-gap {
    margin-left: 16px;
}
.title-row {
    display: flex;
    align-items: center;
    justify-content: space-between;
    height: 20px;
    margin-top: 5px;
    padding: 0 8px 1px 10px;
}
.title {
    max-width: 257px;
    overflow: hidden;
    font-size: 13.850px;
    font-weight: 600;
    color: #262b3d;
    white-space: nowrap;
    text-overflow: ellipsis;
}
.vdots {
    width: 16px;
    height: 16px;
    margin-left: -5px;
}
.progress {
    display: flex;
    align-items: center;
    height: 24px;
    margin-bottom: 1px;
    padding: 0 10px;
}
.track {
    flex: none;
    width: 233px;
    height: 4px;
    background-color: #e8ebf3;
}
.fill {
    height: 100%;
    background-color: #3ba9ee;
}
.pct {
    margin-left: auto;
    font-size: 14px;
    color: #3b4050;
}
.bar-done {
    height: 4px;
    margin: 2px 10px 3px;
    background-color: #7acc52;
}
.avatars {
    display: flex;
    height: 22px;
    margin: 14px 0 2px;
    padding-left: 10px;
}
.progress + .avatars {
    margin-top: 15px;
}
.av {
    display: flex;
    align-items: center;
    justify-content: center;
    flex: none;
    width: 22px;
    height: 22px;
    overflow: hidden;
    border-radius: 50%;
    color: #fff;
    font-size: 14px;
}
.av + .av {
    margin-left: -8px;
}
.av-g { background-color: #00ce97; }
.av-t { background-color: #ffc46e; }
.av-n { background-color: #2f75dd; }
.av-grp { background-color: #6d44e2; }
.av-grp .ic { color: #fff; }
.av-36 { width: 36px; height: 36px; font-size: 14px; }
.av-28 { width: 28px; height: 28px; font-size: 12px; }
.dates {
    display: flex;
    align-items: center;
    height: 18px;
    margin: 10px 0 4px;
    padding: 0 14px 0 13px;
    font-size: 14px;
}
.dates-solved {
    margin-top: 23px;
}
.date-text {
    flex: none;
    margin-left: 9px;
    color: #a2a6b4;
}
.metas {
    display: flex;
    flex: none;
    gap: 16px;
    margin-left: auto;
    padding-left: 8px;
}
.meta {
    display: flex;
    align-items: center;
    gap: 4px;
    color: #3b4050;
}
.meta-ring {
    gap: 8px;
}
.add {
    display: flex;
    align-items: center;
    gap: 8px;
    height: 18px;
    margin: 8px 0 0;
    font-size: 14px;
    color: #a2a6b4;
}
.add .ic {
    color: #a2a6b4;
}

/* scrollbar */
.scrollbar {
    display: flex;
    flex: none;
    flex-direction: column;
    align-items: center;
    width: 9px;
    background-color: #f1f3f7;
}
.scroll-up {
    width: 0;
    height: 0;
    margin-top: 3px;
    border: 3px solid transparent;
    border-top: 0;
    border-bottom: 4px solid #7e88a8;
}
.scroll-thumb {
    width: 6px;
    height: 770px;
    margin-top: 5px;
    background-color: #7e88a8;
    border-radius: 3px;
}

/* side panel */
.panel {
    flex: 1;
    overflow: hidden;
    background-color: #fff;
}
.panel-head {
    position: relative;
    height: 46px;
    text-align: center;
}
.panel-head h2 {
    margin: 0;
    padding-right: 6px;
    font-size: 18px;
    font-weight: 600;
    line-height: 46px;
    color: #262b3d;
}
.panel-close {
    position: absolute;
    top: 14px;
    right: 4px;
}
.panel-tags {
    display: flex;
    gap: 3px;
    height: 16px;
    margin-top: 5px;
    padding-left: 16px;
}
.panel-actions {
    display: flex;
    align-items: center;
    justify-content: flex-end;
    gap: 26px;
    height: 39px;
    margin-top: 12px;
    padding: 0 16px 6px 0;
    border-bottom: 1px solid #e4e6ea;
}
.act-btn {
    display: flex;
    align-items: center;
    justify-content: center;
    width: 30px;
    height: 30px;
    padding: 0;
    background-color: #fff;
    border: 0;
    border-radius: 9px;
    box-shadow: 0 1px 4px rgba(20, 30, 60, .2);
}
.act-first {
    margin-right: -6px;
}
.act-last {
    margin-right: -8px;
}
.btn {
    height: 32px;
    border: 0;
    border-radius: 4px;
    font-family: "Noto Sans", sans-serif;
    font-size: 14px;
    font-weight: 600;
}
.btn-cancel {
    width: 79px;
    margin-right: -16px;
    background-color: #f1f3f7;
    color: #3b4050;
}
.btn-save {
    width: 65px;
    background-color: #36a9ef;
    color: #fff;
}
.form {
    padding: 2px 20px 2px 20px;
    border-bottom: 1px solid #eceef2;
}
.lbl {
    display: block;
    height: 20px;
    margin: 0 0 4px;
    font-size: 14px;
    font-weight: 600;
    line-height: 20px;
    color: #2f3446;
}
.lbl b {
    color: #f22;
    font-weight: 600;
}
.lbl-next { margin-top: 4px; }
.lbl-dates { margin-top: 5px; }
.lbl-percent { margin: 5px 0 10px; }
.lbl-user { margin-top: 9px; }
.field {
    display: block;
    width: 100%;
    height: 32px;
    padding: 0 12px 1px;
    background-color: #fff;
    border: 1px solid #e3e5ea;
    border-radius: 4px;
    font-family: "Noto Sans", sans-serif;
    font-size: 14px;
    color: #3b4050;
    outline: 0;
}
.field::placeholder {
    color: #7d8291;
}
.area {
    display: block;
    width: 100%;
    height: 99px;
    padding: 5px 8px;
    background-color: #fff;
    border: 1px solid #e3e5ea;
    border-radius: 4px;
    font-family: "Noto Sans", sans-serif;
    font-size: 14px;
    line-height: 20px;
    color: #3b4050;
    outline: 0;
}
.slider {
    position: relative;
    height: 13px;
    background-color: #d9ddec;
    border-radius: 4px;
}
.slider-fill {
    height: 100%;
    background-color: #36a9ef;
    border-radius: 4px 0 0 4px;
}
.slider-thumb {
    position: absolute;
    top: 0;
    left: 35%;
    width: 13px;
    height: 13px;
    background-color: #2b8fd8;
    border-radius: 50%;
    box-shadow: 0 2px 8px rgba(43, 143, 216, .25);
}
.multi {
    padding: 3px 1px 1px;
    border: 1px solid #e3e5ea;
    border-radius: 4px;
}
.chip {
    display: flex;
    align-items: center;
    width: fit-content;
    margin: 0 0 4px 2px;
    background-color: #f1f3f7;
    border-radius: 3px;
    font-size: 14px;
    color: #3b4050;
}
.chip-user {
    height: 40px;
    padding: 0 6px 0 8px;
}
.chip-user .av {
    margin-right: 5px;
}
.chip-user .ic {
    margin-left: 11px;
}
.chip-group {
    height: 24px;
    margin-bottom: 3px;
    padding: 0 7px 1px 13px;
}
.chip-group .ic {
    margin-left: 11px;
}
.multi-input {
    display: flex;
    align-items: center;
    justify-content: flex-end;
    height: 30px;
    padding-right: 7px;
    border: 1px solid #e3e5ea;
    border-radius: 4px;
}
.pair {
    display: grid;
    grid-template-columns: 260px 1fr;
    column-gap: 9px;
}
.date-field, .select-field {
    display: flex;
    align-items: center;
    justify-content: space-between;
}
.date-field {
    padding-right: 5px;
}
.select-field {
    padding: 0 7px 1px 8px;
}
.checklist {
    height: 91px;
    padding: 2px 20px 0 20px;
}
.checklist .lbl {
    margin: 0;
}
.no-items {
    height: 20px;
    margin: 8px 0 8px;
    font-size: 14px;
    line-height: 20px;
    color: #a2a6b4;
}
.comments {
    height: 327px;
    padding: 16px 20px 0 20px;
    background-color: #f1f3f7;
}
.comments .lbl {
    margin: 0 0 24px;
}
.comment {
    display: flex;
    gap: 12px;
}
.comment-author {
    font-size: 14px;
    font-weight: 600;
    line-height: 20px;
    color: #2f3446;
}
.comment-date {
    margin-top: 4px;
    font-size: 12px;
    line-height: 20px;
    color: #a2a6b4;
}
.comment-body {
    flex: 1;
}
.bubble {
    height: 72px;
    margin-top: 4px;
    padding: 15px 16px;
    background-color: #fff;
    border-radius: 8px;
    font-size: 11.900px;
    line-height: 20px;
    color: #3b4050;
}
.comment-new {
    margin-top: 20px;
}
.comment-area {
    flex: 1;
    padding: 6px 8px;
}
.comment-area::placeholder {
    color: #a2a6b4;
}
.files {
    padding: 3px 20px 0 20px;
}
.files .lbl {
    margin: 0 0 7px;
}
.dropzone {
    height: 60px;
    background-color: #f1f3f7;
    border: 1px dashed #dcdfe6;
    border-radius: 4px;
}

/* browser full screen notice */
.fs-warning {
    position: absolute;
    top: 45px;
    left: 670px;
    display: flex;
    align-items: center;
    width: 522px;
    height: 54px;
    padding-left: 40px;
    background-color: #2a2c33;
    color: #fff;
    font-size: 17.300px;
}
.fs-warning kbd {
    height: 38px;
    margin-left: 7px;
    padding: 0 5px;
    border: 1px solid #fff;
    font-family: "Noto Sans", sans-serif;
    line-height: 36px;
}
```
